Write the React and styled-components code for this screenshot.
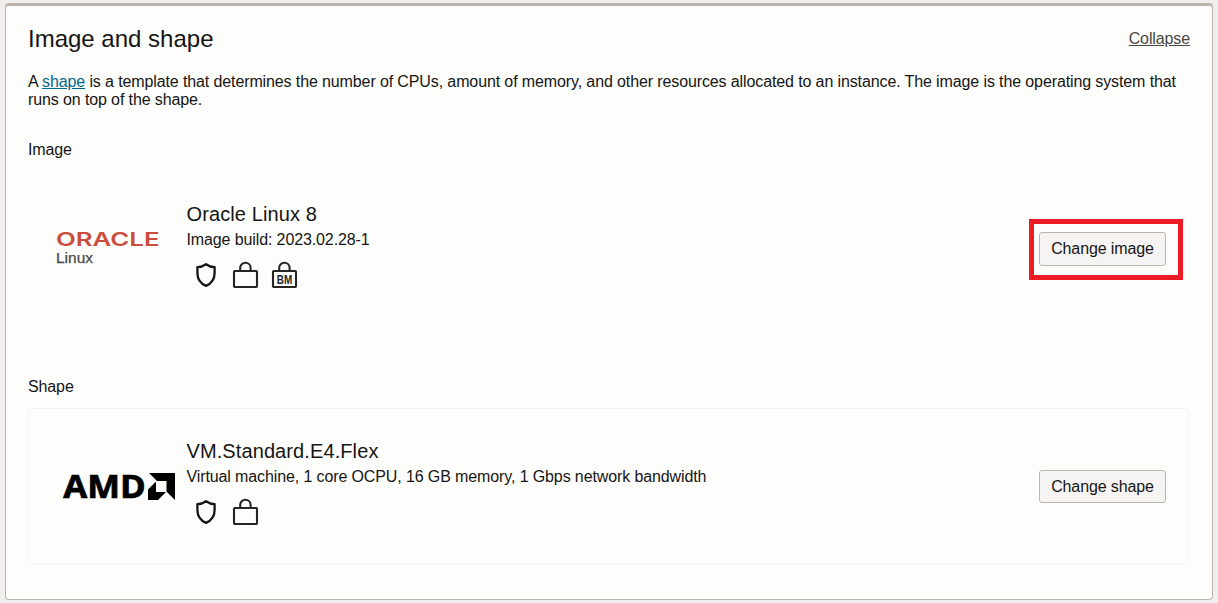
import React from "react";
import styled, { createGlobalStyle } from "styled-components";

const GlobalStyle = createGlobalStyle`
  * { box-sizing: border-box; }
  body {
    margin: 0;
    background: #f1efed;
    color: #161513;
    font: 16px/18px "Liberation Sans", Arial, sans-serif;
    letter-spacing: -0.115px;
  }
`;

const Page = styled.main`
  height: 603px;
  padding: 3px 5px;
`;

const Panel = styled.section`
  height: 597px;
  padding: 20px 23px 0 22px;
  border: 1px solid #bbb5ae;
  border-top-width: 3px;
  border-radius: 4px;
  background: #fdfdfb;
`;

const PanelHeader = styled.header`
  display: flex;
  justify-content: space-between;
  align-items: center;
  height: 26px;
`;

const Heading = styled.h2`
  margin: 0;
  font-size: 24px;
  line-height: 26px;
  font-weight: 400;
  letter-spacing: 0;
`;

const CollapseLink = styled.a`
  color: #4a4642;
  text-decoration: underline;
  margin-right: -1px;
`;

const Description = styled.p`
  margin: 21px 0 0;
  height: 36px;
`;

const DocLink = styled.a`
  color: #00688c;
  text-decoration: underline;
`;

const Field = styled.div`
  margin-top: ${(p) => p.$gap}px;
`;

const FieldLabel = styled.div`
  height: 18px;
  margin-bottom: 12px;
`;

const Card = styled.div`
  display: flex;
  align-items: flex-start;
  height: 157px;
  padding: 0 22px 0 0;
  border: 1px solid ${(p) => (p.$outlined ? "#f5f4f2" : "transparent")};
  border-radius: 4px;
`;

const LogoSlot = styled.div`
  width: 157.5px;
  flex: none;
  padding: ${(p) => p.$pad};
  svg { display: block; }
`;

const Details = styled.div`
  flex: 1;
  padding-top: 30px;
`;

const ItemTitle = styled.div`
  font-size: 20px;
  line-height: 24px;
  letter-spacing: 0.1px;
`;

const ItemText = styled.div`
  margin-top: 5px;
`;

const BadgeRow = styled.div`
  display: flex;
  align-items: flex-start;
  gap: 13px;
  margin: 12px 0 0 7.5px;
  svg { display: block; overflow: visible; }
`;

const ActionArea = styled.div`
  position: relative;
  margin-top: ${(p) => p.$top}px;
`;

const ActionButton = styled.button`
  display: block;
  width: 127px;
  height: ${(p) => p.$height}px;
  padding: ${(p) => (p.$height % 2 ? "1px 0 0" : "0 0 1px")};
  border: 1px solid #bbb5ae;
  border-radius: 3px;
  background: #f6f4f3;
  color: #161513;
  font: inherit;
  letter-spacing: inherit;
  white-space: nowrap;
`;

const Highlight = styled.div`
  position: absolute;
  top: -13px;
  left: -10px;
  width: 154px;
  height: 61px;
  border: 5px solid #ed1c24;
  pointer-events: none;
`;

const OracleLogo = () => (
  <svg width="110" height="36" viewBox="0 0 110 36" letterSpacing="0" role="img" aria-label="Oracle Linux">
    <text x="0" y="15" fontFamily="Inter, sans-serif" fontWeight="600" fontSize="18.5" fill="#cb4d3e" textLength="103.5" lengthAdjust="spacingAndGlyphs">ORACLE</text>
    <text x="0" y="31.7" fontFamily="Liberation Sans, sans-serif" fontSize="14.5" fill="#4a4a4a" stroke="#4a4a4a" strokeWidth="0.25" textLength="37" lengthAdjust="spacingAndGlyphs">Linux</text>
  </svg>
);

const AmdLogo = () => (
  <svg width="114" height="28" viewBox="0 0 114 28" overflow="visible" letterSpacing="0" role="img" aria-label="AMD">
    <text x="0.3" y="25" fontFamily="Open Sans, sans-serif" fontWeight="700" fontSize="31.5" fill="#000" stroke="#000" strokeWidth="0.7" textLength="82.5" lengthAdjust="spacingAndGlyphs">AMD</text>
    <path d="M86 0H112V27L103.5 18.5V8H94Z M93 8.5V19H103L95 27H85V16.5Z" fill="#000" />
  </svg>
);

const ShieldIcon = () => (
  <svg width="24" height="28" viewBox="0 0 24 28" fill="none" stroke="#161513" strokeWidth="2.3" strokeLinejoin="round">
    <path d="M12 3.2C14.8 5.2 17.3 6 20.6 6.1V12C20.6 18.3 17.4 22.5 12 24.9C6.6 22.5 3.4 18.3 3.4 12V6.1C6.7 6 9.2 5.2 12 3.2Z" />
  </svg>
);

const LockIcon = ({ label }) => (
  <svg width="26" height="28" viewBox="0 0 26 28" fill="none" stroke="#262524" strokeWidth="2.1">
    <rect x="3" y="10" width="23" height="16" rx="0.7" />
    <path d="M9.2 10V6.8A5.2 5 0 0 1 19.6 6.8V10" />
    {label && (
      <text x="14.5" y="22.6" textAnchor="middle" fontFamily="Liberation Sans, sans-serif" fontWeight="700" fontSize="12.5" letterSpacing="0" fill="#262524" stroke="none" textLength="15.5" lengthAdjust="spacingAndGlyphs">{label}</text>
    )}
  </svg>
);

export default function App() {
  return (
    <>
      <GlobalStyle />
      <Page>
        <Panel>
          <PanelHeader>
            <Heading>Image and shape</Heading>
            <CollapseLink>Collapse</CollapseLink>
          </PanelHeader>
          <Description>
            A <DocLink>shape</DocLink> is a template that determines the number of CPUs, amount of
            memory, and other resources allocated to an instance. The image is the operating system
            that runs on top of the shape.
          </Description>

          <Field $gap={32}>
            <FieldLabel>Image</FieldLabel>
            <Card>
              <LogoSlot $pad="59px 0 0 27px"><OracleLogo /></LogoSlot>
              <Details>
                <ItemTitle>Oracle Linux 8</ItemTitle>
                <ItemText>Image build: 2023.02.28-1</ItemText>
                <BadgeRow>
                  <ShieldIcon />
                  <LockIcon />
                  <LockIcon label="BM" />
                </BadgeRow>
              </Details>
              <ActionArea $top={60}>
                <ActionButton $height={34}>Change image</ActionButton>
                <Highlight />
              </ActionArea>
            </Card>
          </Field>

          <Field $gap={50}>
            <FieldLabel>Shape</FieldLabel>
            <Card $outlined>
              <LogoSlot $pad="64px 0 0 34px"><AmdLogo /></LogoSlot>
              <Details>
                <ItemTitle>VM.Standard.E4.Flex</ItemTitle>
                <ItemText>Virtual machine, 1 core OCPU, 16 GB memory, 1 Gbps network bandwidth</ItemText>
                <BadgeRow>
                  <ShieldIcon />
                  <LockIcon />
                </BadgeRow>
              </Details>
              <ActionArea $top={61}>
                <ActionButton $height={33}>Change shape</ActionButton>
              </ActionArea>
            </Card>
          </Field>
        </Panel>
      </Page>
    </>
  );
}
